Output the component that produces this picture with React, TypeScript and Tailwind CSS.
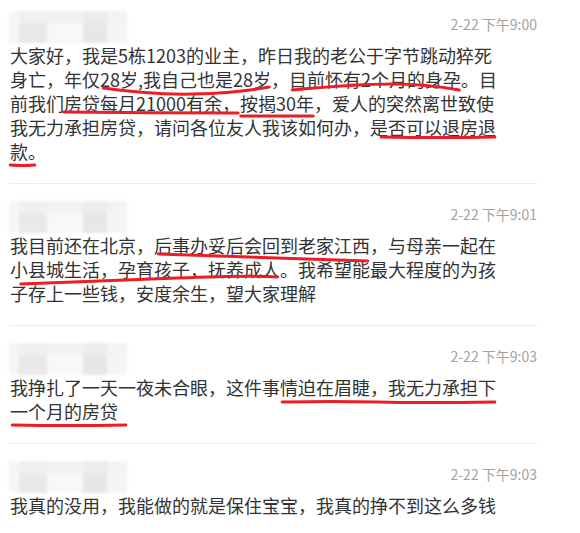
import React from "react";

const RED = "#ee1c24";

function U({
  children,
  d,
  box = "left-0 right-0",
}: {
  children: React.ReactNode;
  d: string;
  box?: string;
}) {
  return (
    <span className="relative">
      {children}
      <span className={`pointer-events-none absolute top-[16px] block h-[16px] ${box}`}>
        <svg
          viewBox="0 0 100 16"
          preserveAspectRatio="none"
          className="block h-full w-full overflow-visible"
        >
          <path
            d={d}
            fill="none"
            stroke={RED}
            strokeWidth={3}
            strokeLinecap="round"
            strokeLinejoin="round"
            vectorEffect="non-scaling-stroke"
          />
        </svg>
      </span>
    </span>
  );
}

function Mosaic() {
  return (
    <div className="-my-[8px] flex h-[32px] w-[118px] translate-y-[3px] blur-[1.5px]">
      <div className="w-[10px] bg-[#f6f6f6]" />
      <div className="flex w-[28px] flex-col">
        <div className="h-[12px] bg-[#f0f0f0]" />
        <div className="flex-1 bg-[#e9e9e9]" />
      </div>
      <div className="flex w-[36px] flex-col">
        <div className="h-[12px] bg-[#f2f2f2]" />
        <div className="flex-1 bg-[#f8f8f8]" />
      </div>
      <div className="flex w-[24px] flex-col">
        <div className="h-[12px] bg-[#ececec]" />
        <div className="flex-1 bg-[#e7e7e7]" />
      </div>
      <div className="flex w-[20px] flex-col">
        <div className="h-[12px] bg-[#f3f3f3]" />
        <div className="flex-1 bg-[#f5f5f5]" />
      </div>
    </div>
  );
}

function Block({
  time,
  first,
  last,
  children,
}: {
  time: string;
  first?: boolean;
  last?: boolean;
  children: React.ReactNode;
}) {
  return (
    <div
      className={`${first ? "pt-[15px]" : "pt-[21px]"} ${
        last ? "" : "border-b border-[#ececec] pb-[20px]"
      }`}
    >
      <div className="flex h-[18px] items-center justify-between">
        <Mosaic />
        <div className="text-[14px] leading-[18px] text-[#a3a3a3]">{time}</div>
      </div>
      <div className="mt-[10px] pl-[1px] text-[18px] leading-[24px] text-[#333333]">
        {children}
      </div>
    </div>
  );
}

function L({ children }: { children: React.ReactNode }) {
  return <div className="whitespace-nowrap">{children}</div>;
}

export default function App() {
  return (
    <div
      className="h-[533px] w-[580px] overflow-hidden bg-white"
      style={{ fontFamily: '"Noto Sans CJK SC", "Noto Sans", sans-serif' }}
    >
      <div className="ml-[9px] w-[528px]">
        <Block time="2-22 下午9:00" first>
          <L>大家好，我是5栋1203的业主，昨日我的老公于字节跳动猝死</L>
          <L>
            身亡，年仅
            <U d="M2,6 Q30,13 55,12 T99,5">28岁,我自己也是28岁</U>，
            <U d="M2,8 Q40,2 60,2 T99,8">目前怀有2个月的身孕</U>。目
          </L>
          <L>
            前我们
            <U d="M1,6 Q50,7 99,7" box="-left-[2px] right-0">
              房贷每月21000有余，
            </U>
            <U d="M1,10 Q50,10 99,10">按揭30年</U>，爱人的突然离世致使
          </L>
          <L>
            我无力承担房贷，请问各位友人我该如何办，是
            <U d="M1,7 Q50,8 99,7" box="-left-[8px] right-0">
              否可以退房退
            </U>
          </L>
          <L>
            <U d="M1,11 Q50,12 99,11" box="left-0 -right-[7px]">
              款
            </U>
            。
          </L>
        </Block>
        <Block time="2-22 下午9:01">
          <L>
            我目前还在北京，
            <U d="M2,6 Q50,9 99,13">后事办妥后会回到老家江西</U>
            ，与母亲一起在
          </L>
          <L>
            <U d="M4,12 Q35,9 62,6 T99,5">小县城生活，孕育孩子，抚养成人</U>
            。我希望能最大程度的为孩
          </L>
          <L>子存上一些钱，安度余生，望大家理解</L>
        </Block>
        <Block time="2-22 下午9:03">
          <L>
            我挣扎了一天一夜未合眼，这件事
            <U d="M1,12 Q25,11 45,12 T99,12" box="left-0 -right-[1px]">
              情迫在眉睫，我无力承担下
            </U>
          </L>
          <L>
            <U d="M2,11 Q50,12 99,11" box="left-0 -right-[9px]">
              一个月的房贷
            </U>
          </L>
        </Block>
        <Block time="2-22 下午9:03" last>
          <L>我真的没用，我能做的就是保住宝宝，我真的挣不到这么多钱</L>
        </Block>
      </div>
    </div>
  );
}
